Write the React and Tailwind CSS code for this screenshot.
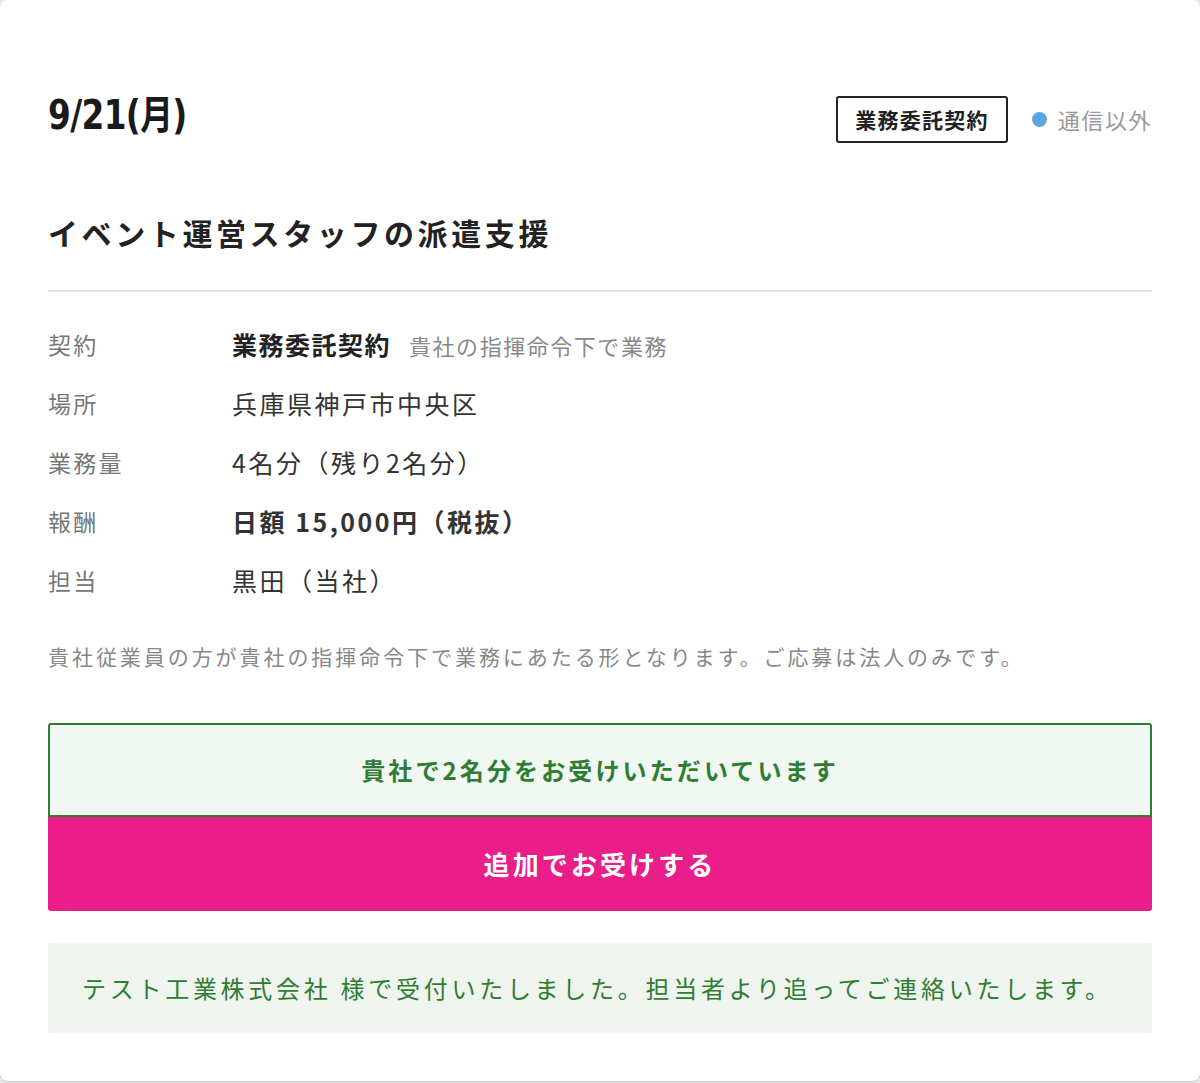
import React from "react";

const jp = "font-['Noto_Sans_CJK_JP','Noto_Sans',sans-serif]";

const rows = [
  { label: "契約", value: <><span className="font-bold text-[#222] tracking-[0.06em]">業務委託契約</span><span className="ml-[18px] text-[22px] tracking-[0.07em] text-[#888]">貴社の指揮命令下で業務</span></> },
  { label: "場所", value: <span>兵庫県神戸市中央区</span> },
  { label: "業務量", value: <span>4名分（残り2名分）</span> },
  { label: "報酬", value: <span className="font-bold">日額 15,000円（税抜）</span> },
  { label: "担当", value: <span>黒田（当社）</span> },
];

export default function App() {
  return (
    <div className={`min-h-[1083px] bg-[#e9e9e9] ${jp}`}>
      <div className="h-[1081px] rounded-lg bg-white px-[48px] pt-[86px] shadow-[0_1px_2px_rgba(0,0,0,0.15)]">
        {/* header: date and badges */}
        <div className="flex items-center justify-between">
          <div className="inline-block origin-left scale-x-[0.82] font-['DejaVu_Sans','Noto_Sans_CJK_JP',sans-serif] text-[40px] font-bold leading-[56px] tracking-[-0.02em] text-[#1a1a1a]">
            9/21(月)
          </div>
          <div className="mt-[10px] flex items-center">
            <span className="flex h-[47px] items-center rounded-[3px] border-2 border-[#222] px-[17px] text-[21px] font-bold tracking-[0.06em] text-[#222]">
              業務委託契約
            </span>
            <span className="ml-[24px] h-[15px] w-[15px] rounded-full bg-[#5aa7dd]" />
            <span className="ml-[11px] text-[22px] tracking-[0.07em] text-[#999]">通信以外</span>
          </div>
        </div>

        <h1 className="mt-[67px] text-[30px] font-bold leading-[44px] tracking-[0.12em] text-[#222]">
          イベント運営スタッフの派遣支援
        </h1>
        <div className="mt-[36px] h-[2px] bg-[#e2e2e2]" />

        {/* detail rows */}
        <div className="mt-[23px] flex flex-col">
          {rows.map((r) => (
            <div key={r.label} className="flex h-[59px] items-center">
              <div className="w-[184px] text-[23px] tracking-[0.1em] text-[#777]">{r.label}</div>
              <div className="text-[25px] tracking-[0.1em] text-[#333]">{r.value}</div>
            </div>
          ))}
        </div>

        <p className="mt-[31px] text-[21px] tracking-[0.14em] text-[#888]">
          貴社従業員の方が貴社の指揮命令下で業務にあたる形となります。ご応募は法人のみです。
        </p>

        {/* status and action */}
        <div className="mt-[50px] flex h-[94px] items-center justify-center rounded-t-[3px] border-2 border-[#2e7d32] bg-[#f1f7f2] text-[24px] font-bold tracking-[0.13em] text-[#2e7d32]">
          貴社で2名分をお受けいただいています
        </div>
        <button className="flex h-[94px] w-full items-center justify-center rounded-b-[3px] bg-[#e91e89] text-[26px] font-bold tracking-[0.12em] text-white">
          追加でお受けする
        </button>

        <div className="mt-[32px] flex h-[90px] items-center rounded-[2px] bg-[#eff4ef] px-[34px] text-[24px] tracking-[0.155em] text-[#2e7d32]">
          テスト工業株式会社 様で受付いたしました。担当者より追ってご連絡いたします。
        </div>
      </div>
    </div>
  );
}
